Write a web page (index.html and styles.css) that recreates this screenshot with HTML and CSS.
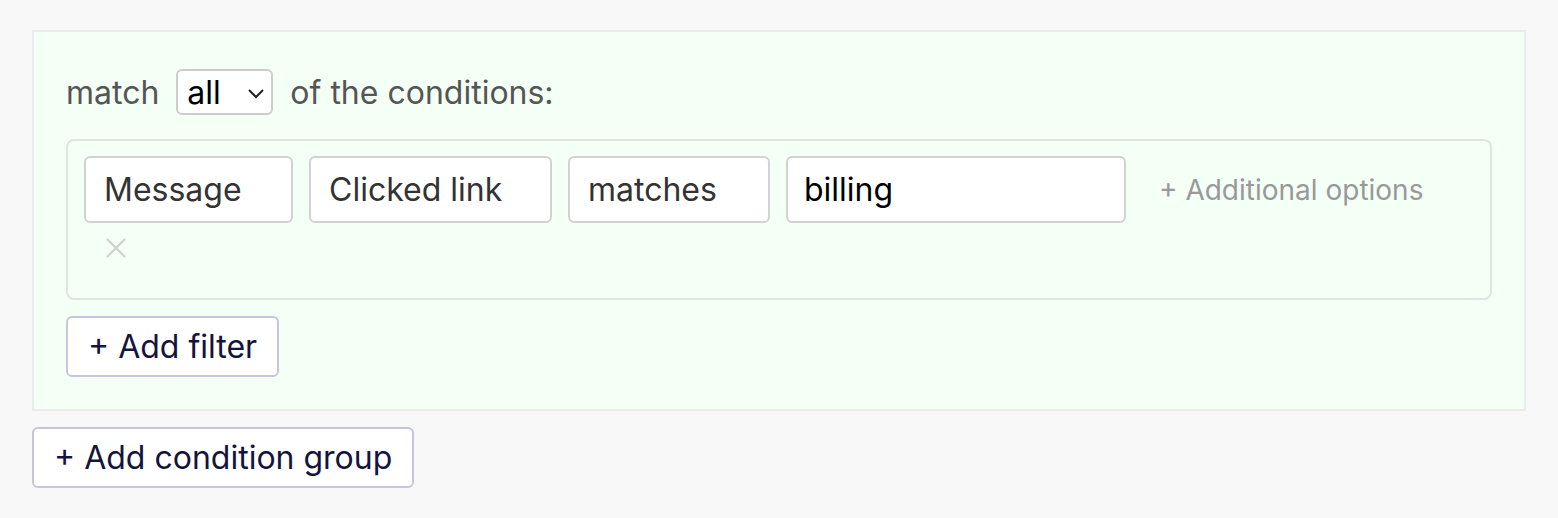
FILE: index.html
```html
<!DOCTYPE html>
<html lang="en">
<head>
    <meta charset="UTF-8">
    <title>Conditions</title>
    <link rel="stylesheet" href="styles.css">
</head>
<body>
    <div class="group">
        <div class="match-row">
            <span>match</span>
            <div class="select">
                <span>all</span>
                <svg class="chevron" width="18" height="11" viewBox="0 0 18 11"><path d="M2 2 L9 9 L16 2" fill="none" stroke="#222" stroke-width="2"/></svg>
            </div>
            <span>of the conditions:</span>
        </div>
        <div class="condition">
            <div class="field field-message">Message</div>
            <div class="field field-link">Clicked link</div>
            <div class="field field-op">matches</div>
            <div class="field field-value">billing</div>
            <a class="extra">+ Additional options</a>
            <div class="remove">
                <svg width="20" height="20" viewBox="0 0 20 20"><path d="M1 1 L19 19 M19 1 L1 19" stroke="#cfcfcf" stroke-width="2"/></svg>
            </div>
        </div>
        <button class="btn">+ Add filter</button>
    </div>
    <button class="btn">+ Add condition group</button>
</body>
</html>
```

FILE: styles.css
```css
html, body {
    margin: 0;
    padding: 0;
    font-family: Inter, "Noto Sans", sans-serif;
}
body {
    background-color: #f8f8f8;
    padding: 30px 32px;
    display: flex;
    flex-direction: column;
    align-items: flex-start;
}

/* group panel */
.group {
    box-sizing: border-box;
    width: 100%;
    background-color: #f4fff6;
    border: 2px solid #ebebeb;
    padding: 37px 32px 32px;
    margin-bottom: 16px;
    display: flex;
    flex-direction: column;
    align-items: flex-start;
}

.match-row {
    display: flex;
    align-items: center;
    gap: 17px;
    font-size: 32px;
    color: #555;
    margin-bottom: 24px;
}
.select {
    box-sizing: border-box;
    width: 97px;
    height: 46px;
    background: #fff;
    border: 2px solid #ccc;
    border-radius: 6px;
    display: flex;
    align-items: center;
    justify-content: space-between;
    padding: 0 6px 0 9px;
    color: #000;
}
.chevron {
    margin-top: 2px;
}

/* condition box */
.condition {
    box-sizing: border-box;
    width: 100%;
    border: 2px solid #dfe5df;
    border-radius: 8px;
    padding: 15px 16px 16px;
    display: flex;
    flex-wrap: wrap;
    align-items: center;
    column-gap: 16px;
    margin-bottom: 16px;
}
.field {
    box-sizing: border-box;
    height: 67px;
    background: #fff;
    border: 2px solid #d2d2d2;
    border-radius: 6px;
    padding: 0 18px;
    display: flex;
    align-items: center;
    font-size: 32px;
    color: #333;
}
.field-message { width: 209px; }
.field-link { width: 243px; }
.field-op { width: 202px; }
.field-value { width: 340px; padding: 0 16px; color: #000; }

.extra {
    font-size: 28px;
    color: #999;
    padding-left: 17px;
}
.remove {
    width: 100%;
    height: 44px;
    padding: 15px 0 0 22px;
}

/* buttons */
.btn {
    font-family: inherit;
    font-size: 32px;
    color: #14143c;
    background: #fff;
    border: 2px solid #c5c5dd;
    border-radius: 6px;
    height: 61px;
    padding: 0 20px;
}
```
